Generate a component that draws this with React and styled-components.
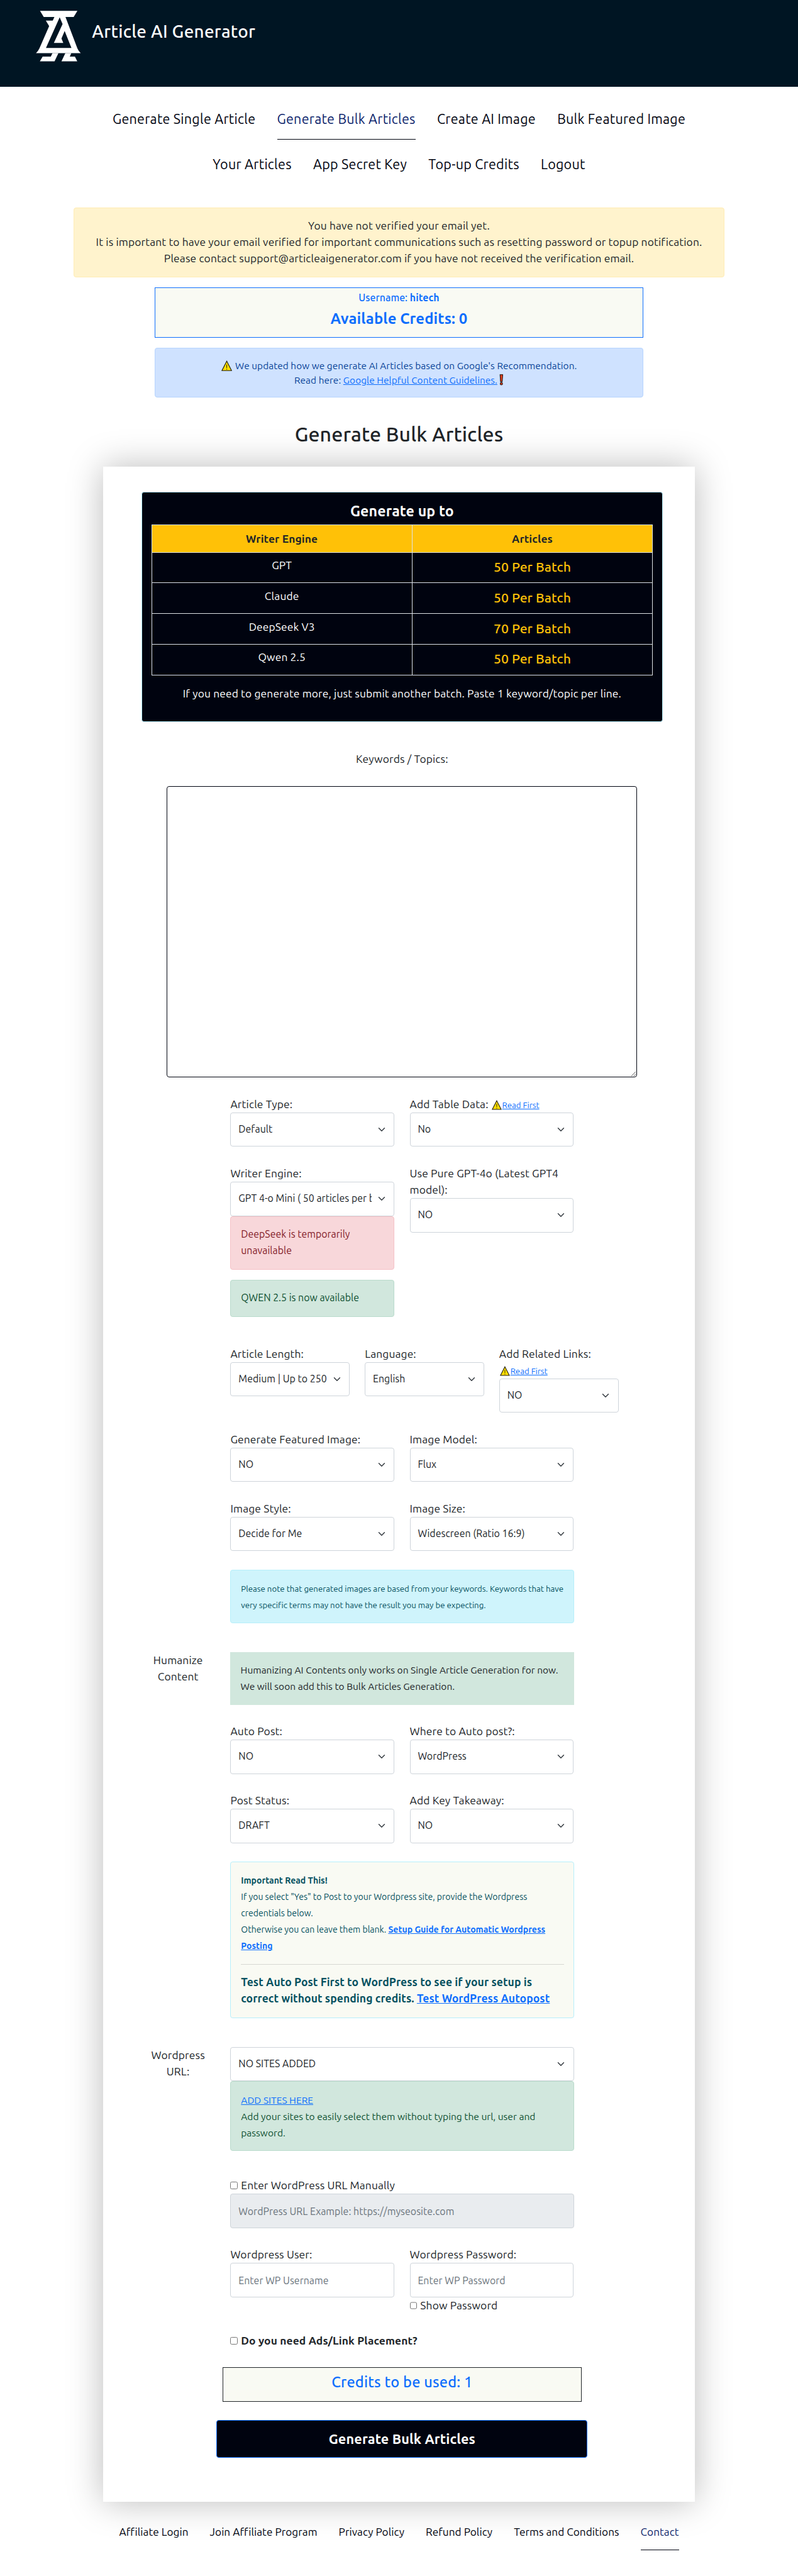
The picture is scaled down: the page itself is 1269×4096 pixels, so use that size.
import React from 'react';
import styled, { createGlobalStyle, css } from 'styled-components';

const rem = (px) => `${px / 16}rem`;

const ink = '#212529';
const night = '#00030f';
const blue = '#0d6efd';
const amber = '#ffc107';
const cream = '#f9faf3';

const Global = createGlobalStyle`
  *, *::before, *::after { box-sizing: border-box; }
  html { font-size: 10.574px; }
  body {
    margin: 0;
    background: #fff;
    color: ${ink};
    font-family: Ubuntu, "Noto Sans", "Open Sans", sans-serif;
    font-size: ${rem(26.3)};
    line-height: ${rem(39.4)};
    letter-spacing: 0.008em;
  }
`;

const Header = styled.header`
  display: flex;
  align-items: flex-start;
  height: ${rem(209)};
  padding: ${rem(25.7)} 0 0 ${rem(86.7)};
  background: #001523;
`;

const LogoMark = styled.svg`
  width: ${rem(108.7)};
  height: ${rem(122.3)};
  fill: #fff;
`;

const Brand = styled.span`
  margin: ${rem(23.7)} 0 0 ${rem(26)};
  color: #fff;
  font-size: ${rem(42)};
  font-weight: 500;
  line-height: ${rem(50)};
  letter-spacing: 0.011em;
`;

const Nav = styled.nav`
  display: flex;
  flex-direction: column;
  height: ${rem(290)};
  padding-top: ${rem(54.6)};
`;

const NavRow = styled.div`
  display: flex;
  justify-content: center;
  gap: ${rem(51.8)};
  height: ${rem(108.8)};
`;

const NavLink = styled.a`
  height: ${rem(72.8)};
  color: ${({ $active }) => ($active ? '#0b1f6b' : night)};
  font-size: ${rem(32.5)};
  line-height: ${rem(48)};
  letter-spacing: 0.0125em;
  white-space: nowrap;
  border-bottom: 1px solid ${({ $active }) => ($active ? night : 'transparent')};
`;

const Main = styled.main`
  display: flex;
  flex-direction: column;
  align-items: center;
`;

const VerifyNotice = styled.div`
  width: ${rem(1565)};
  height: ${rem(168)};
  padding-top: ${rem(23)};
  text-align: center;
  background: #fff3cd;
  border: 1px solid #ffecb5;
  border-radius: ${rem(6)};
  line-height: ${rem(39.46)};
`;

const AccountBox = styled.section`
  width: ${rem(1175)};
  height: ${rem(122)};
  margin-top: ${rem(24)};
  padding-top: ${rem(6.5)};
  text-align: center;
  color: ${blue};
  background: ${cream};
  border: 1px solid ${blue};
`;

const Username = styled.div`
  font-size: ${rem(24)};
  font-weight: 500;
  line-height: ${rem(36)};
  letter-spacing: 0.004em;
`;

const Balance = styled.div`
  margin-top: ${rem(4.6)};
  font-size: ${rem(36)};
  font-weight: 700;
  line-height: ${rem(54)};
`;

const UpdateNotice = styled.div`
  width: ${rem(1175)};
  height: ${rem(120)};
  margin-top: ${rem(23.5)};
  padding-top: ${rem(24)};
  text-align: center;
  color: #084298;
  background: #cfe2ff;
  border: 1px solid #b6d4fe;
  border-radius: ${rem(6)};
  font-size: ${rem(23.2)};
  line-height: ${rem(34.8)};
  letter-spacing: 0.005em;
`;

const Link = styled.a`
  color: ${blue};
  text-decoration: underline;
  font-weight: ${({ $bold }) => ($bold ? 700 : 'inherit')};
`;

const HintLink = styled(Link)`
  font-size: ${rem(20)};
  line-height: 0;
  letter-spacing: 0;
`;

const WarnIcon = styled.svg`
  width: ${({ $size }) => rem($size)};
  height: ${({ $size }) => rem($size)};
  margin: 0 ${({ $gap }) => rem($gap)} 0 ${({ $lead = 0 }) => rem($lead)};
  vertical-align: ${rem(-5)};
`;

const BangIcon = styled.svg`
  width: ${rem(10)};
  height: ${rem(27)};
  vertical-align: ${rem(-5)};
`;

const Title = styled.h1`
  margin: ${rem(58.9)} 0 ${rem(49.4)};
  font-size: ${rem(48.5)};
  font-weight: 500;
  line-height: ${rem(58)};
  letter-spacing: 0.004em;
`;

const Card = styled.section`
  width: ${rem(1423)};
  height: ${rem(4897)};
  padding: ${rem(61)} 0 0 ${rem(91.4)};
  background: #fff;
  box-shadow: 0 0 ${rem(80)} rgba(0, 0, 0, 0.27);
`;

const Inner = styled.form`
  display: flex;
  flex-direction: column;
  align-items: center;
  width: ${rem(1255)};
`;

const LimitPanel = styled.div`
  width: 100%;
  height: ${rem(553)};
  padding: ${rem(23.5)} ${rem(22.5)} 0;
  color: #fff;
  text-align: center;
  background: ${night};
  border: 1px solid #b6effb;
  border-radius: ${rem(6)};
`;

const PanelTitle = styled.h2`
  margin: 0 0 ${rem(12)};
  font-size: ${rem(35)};
  font-weight: 700;
  line-height: ${rem(42)};
`;

const LimitTable = styled.table`
  width: 100%;
  border-collapse: collapse;
  table-layout: fixed;
`;

const HeadCell = styled.th`
  width: ${({ $w }) => $w};
  height: ${rem(65.3)};
  padding: ${rem(12.3)} 0 0;
  vertical-align: top;
  color: ${ink};
  background: ${amber};
  border: 1px solid #dee2e6;
  font-weight: 700;
`;

const Cell = styled.td`
  height: ${rem(73.9)};
  padding: ${rem(11)} 0 0;
  vertical-align: top;
  border: 1px solid #dee2e6;
  ${({ $accent }) =>
    $accent &&
    css`
      color: ${amber};
      font-size: ${rem(32)};
      font-weight: 500;
      line-height: ${rem(48)};
      letter-spacing: 0.004em;
    `}
`;

const PanelNote = styled.p`
  margin: ${rem(24)} 0 0;
`;

const TopicsLabel = styled.label`
  margin: ${rem(70.5)} 0 ${rem(45)};
`;

const TopicsInput = styled.textarea`
  display: block;
  width: ${rem(1132)};
  height: ${rem(700.5)};
  margin: 0;
  background: #fff;
  border: 1px solid ${night};
  border-radius: ${rem(6)};
  resize: both;
  outline: none;
`;

const FormRow = styled.div`
  display: grid;
  grid-template-columns: ${rem(177)} ${rem(1040)};
  column-gap: ${rem(37.5)};
  width: 100%;
  margin-top: ${({ $gap = 44.3 }) => rem($gap)};
`;

const RowLabel = styled.div`
  text-align: center;
`;

const Fields = styled.div`
  grid-column: 2;
  display: grid;
  grid-template-columns: ${({ $cols }) =>
    $cols === 3 ? `repeat(3, ${rem(287.3)})` : $cols === 2 ? `repeat(2, ${rem(394.9)})` : rem(826.3)};
  column-gap: ${({ $cols }) => ($cols === 3 ? rem(36.1) : rem(36.5))};
  align-items: start;
`;

const Field = styled.div`
  display: flex;
  flex-direction: column;
  min-width: 0;
`;

const control = css`
  width: 100%;
  height: ${rem(82.8)};
  margin: 0;
  font-family: inherit;
  font-size: ${rem(24)};
  letter-spacing: 0.003em;
  line-height: ${rem(36)};
  border: 1px solid #ced4da;
  border-radius: ${rem(6)};
  outline: none;
`;

const SelectWrap = styled.div`
  display: grid;
  align-items: center;
`;

const NativeSelect = styled.select`
  ${control}
  grid-area: 1 / 1;
  appearance: none;
  padding: 0 ${rem(53.5)} 0 ${rem(18)};
  color: ${ink};
  background: #fff;
`;

const Chevron = styled.svg`
  grid-area: 1 / 1;
  justify-self: end;
  width: ${rem(18)};
  height: ${rem(18)};
  margin-right: ${rem(22)};
  pointer-events: none;
`;

const TextInput = styled.input`
  ${control}
  padding: 0 ${rem(18)};
  color: ${ink};
  background: ${({ disabled }) => (disabled ? '#e9ecef' : '#fff')};
  &::placeholder { color: #6c757d; opacity: 1; }
`;

const CheckLabel = styled.label`
  display: flex;
  align-items: center;
  gap: ${rem(7.5)};
  font-weight: ${({ $bold }) => ($bold ? 700 : 400)};
`;

const Checkbox = styled.input`
  width: ${rem(18)};
  height: ${rem(18)};
  margin: 0;
`;

const tones = {
  danger: ['#842029', '#f8d7da', '#f5c2c7'],
  success: ['#0f5132', '#d1e7dd', '#badbcc'],
  info: ['#055160', '#cff4fc', '#b6effb'],
  light: ['#055160', cream, '#b6effb'],
};

const Alert = styled.div`
  height: ${({ $h }) => rem($h)};
  margin-top: ${({ $mt = 0 }) => rem($mt)};
  padding: ${({ $pt = 23.5 }) => rem($pt)} ${rem(22)} 0 ${rem(24)};
  color: ${({ $tone }) => tones[$tone][0]};
  background: ${({ $tone }) => tones[$tone][1]};
  border: 1px solid ${({ $tone }) => tones[$tone][2]};
  border-radius: ${rem(6)};
  font-size: ${({ $size = 24 }) => rem($size)};
  line-height: ${rem(39.2)};
  letter-spacing: 0.001em;
`;

const HumanizeNote = styled.div`
  height: ${rem(126.5)};
  padding: ${rem(24.6)} 0 0 ${rem(24.5)};
  background: #d1e7dd;
  font-size: ${rem(23.4)};
  line-height: ${rem(38.8)};
  letter-spacing: 0.002em;
`;

const Rule = styled.hr`
  height: ${rem(2)};
  margin: ${rem(23)} 0;
  background: currentColor;
  border: 0;
  opacity: 0.28;
`;

const TestNote = styled.p`
  margin: 0;
  font-size: ${rem(26.5)};
  font-weight: 700;
  line-height: ${rem(39.1)};
  letter-spacing: 0.005em;
`;

const CreditBox = styled.div`
  width: ${rem(863.5)};
  height: ${rem(82)};
  margin-top: ${rem(45)};
  padding-top: ${rem(6.5)};
  text-align: center;
  color: ${blue};
  background: ${cream};
  border: 1px solid ${ink};
  font-size: ${rem(35.5)};
  font-weight: 500;
  line-height: ${rem(53)};
  letter-spacing: 0.01em;
`;

const SubmitButton = styled.button`
  width: ${rem(892.7)};
  height: ${rem(90)};
  margin-top: ${rem(45)};
  padding: 0;
  color: #fff;
  background: ${night};
  border: 1px solid ${blue};
  border-radius: ${rem(6)};
  font-family: inherit;
  font-size: ${rem(32.8)};
  font-weight: 700;
  letter-spacing: 0.007em;
`;

const Footer = styled.footer`
  display: flex;
  justify-content: center;
  gap: ${rem(51.4)};
  height: ${rem(179)};
  padding-top: ${rem(52.5)};
`;

const FooterLink = styled.a`
  height: ${rem(64)};
  color: ${({ $active }) => ($active ? '#0b1f6b' : night)};
  font-size: ${rem(26)};
  letter-spacing: 0.003em;
  border-bottom: 1px solid ${({ $active }) => ($active ? night : 'transparent')};
`;

const Logo = () => (
  <LogoMark viewBox="80 77 326 367" aria-hidden="true">
    <path
      fillRule="evenodd"
      d="M110 78H380L353 122H294L380 350Q387 368 404 383H81Q96 370 106 348L176 188L152 148H202L214 122H137ZM252 125L153 346H337L288 224L265 278L278 310H210L273 174Z"
    />
    <path d="M200 383H243L215 443H109L129 408H188ZM293 383H336L325 408H362L379 443H265Z" />
  </LogoMark>
);

const Warning = ({ size = 26, gap = 0, lead = 0 }) => (
  <WarnIcon viewBox="0 0 26 26" $size={size} $gap={gap} $lead={lead} aria-hidden="true">
    <path d="M13 2L24.6 24.6H1.4Z" fill="#ffde00" stroke="#1c1a10" strokeWidth="1.7" />
    <path d="M13 10V18.3M13 20.2V22.2" stroke="#1c1a10" strokeWidth="1.5" />
  </WarnIcon>
);

const Bang = () => (
  <BangIcon viewBox="0 0 10 27" aria-hidden="true">
    <path d="M1.8 1H8.2L7 18H3Z" fill="#e8401c" stroke="#1c1210" strokeWidth="1.6" />
    <circle cx="5" cy="23" r="2.8" fill="#e8401c" stroke="#1c1210" strokeWidth="1.6" />
  </BangIcon>
);

const Select = ({ value }) => (
  <SelectWrap>
    <NativeSelect defaultValue={value}>
      <option value={value}>{value}</option>
    </NativeSelect>
    <Chevron viewBox="0 0 16 16" fill="none" stroke="#343a40" strokeWidth="2" strokeLinecap="round" strokeLinejoin="round">
      <path d="M2 5l6 6 6-6" />
    </Chevron>
  </SelectWrap>
);

const SelectField = ({ label, value, children }) => (
  <Field>
    <label>{label}</label>
    <Select value={value} />
    {children}
  </Field>
);

const ReadFirst = () => (
  <HintLink>
    <Warning size={24} lead={2} gap={1} />
    Read First
  </HintLink>
);

const limits = [
  ['GPT', '50 Per Batch'],
  ['Claude', '50 Per Batch'],
  ['DeepSeek V3', '70 Per Batch'],
  ['Qwen 2.5', '50 Per Batch'],
];

const footerLinks = [
  'Affiliate Login',
  'Join Affiliate Program',
  'Privacy Policy',
  'Refund Policy',
  'Terms and Conditions',
  'Contact',
];

export default function App() {
  return (
    <>
      <Global />
      <Header>
        <Logo />
        <Brand>Article AI Generator</Brand>
      </Header>
      <Nav>
        <NavRow>
          <NavLink>Generate Single Article</NavLink>
          <NavLink $active>Generate Bulk Articles</NavLink>
          <NavLink>Create AI Image</NavLink>
          <NavLink>Bulk Featured Image</NavLink>
        </NavRow>
        <NavRow>
          <NavLink>Your Articles</NavLink>
          <NavLink>App Secret Key</NavLink>
          <NavLink>Top-up Credits</NavLink>
          <NavLink>Logout</NavLink>
        </NavRow>
      </Nav>
      <Main>
        <VerifyNotice>
          You have not verified your email yet.
          <br />
          It is important to have your email verified for important communications such as resetting password or topup
          notification.
          <br />
          Please contact support@articleaigenerator.com if you have not received the verification email.
        </VerifyNotice>
        <AccountBox>
          <Username>
            Username: <b>hitech</b>
          </Username>
          <Balance>Available Credits: 0</Balance>
        </AccountBox>
        <UpdateNotice>
          <Warning gap={8} />
          We updated how we generate AI Articles based on Google's Recommendation.
          <br />
          Read here: <Link>Google Helpful Content Guidelines.</Link> <Bang />
        </UpdateNotice>
        <Title>Generate Bulk Articles</Title>
        <Card>
          <Inner>
            <LimitPanel>
              <PanelTitle>Generate up to</PanelTitle>
              <LimitTable>
                <thead>
                  <tr>
                    <HeadCell $w="52%">Writer Engine</HeadCell>
                    <HeadCell $w="48%">Articles</HeadCell>
                  </tr>
                </thead>
                <tbody>
                  {limits.map(([engine, count]) => (
                    <tr key={engine}>
                      <Cell>{engine}</Cell>
                      <Cell $accent>{count}</Cell>
                    </tr>
                  ))}
                </tbody>
              </LimitTable>
              <PanelNote>
                If you need to generate more, just submit another batch. Paste 1 keyword/topic per line.
              </PanelNote>
            </LimitPanel>

            <TopicsLabel>Keywords / Topics:</TopicsLabel>
            <TopicsInput />

            <FormRow $gap={45}>
              <Fields $cols={2}>
                <SelectField label="Article Type:" value="Default" />
                <SelectField label={<>Add Table Data: <ReadFirst /></>} value="No" />
              </Fields>
            </FormRow>
            <FormRow>
              <Fields $cols={2}>
                <SelectField label="Writer Engine:" value="GPT 4-o Mini ( 50 articles per batch )">
                  <Alert $tone="danger" $h={129}>
                    DeepSeek is temporarily unavailable
                  </Alert>
                  <Alert $tone="success" $h={90} $mt={24}>
                    QWEN 2.5 is now available
                  </Alert>
                </SelectField>
                <SelectField label="Use Pure GPT-4o (Latest GPT4 model):" value="NO" />
              </Fields>
            </FormRow>
            <FormRow $gap={69}>
              <Fields $cols={3}>
                <SelectField label="Article Length:" value="Medium | Up to 2500 words" />
                <SelectField label="Language:" value="English" />
                <SelectField
                  label={<>Add Related Links:<br /><ReadFirst /></>}
                  value="NO"
                />
              </Fields>
            </FormRow>
            <FormRow>
              <Fields $cols={2}>
                <SelectField label="Generate Featured Image:" value="NO" />
                <SelectField label="Image Model:" value="Flux" />
              </Fields>
            </FormRow>
            <FormRow>
              <Fields $cols={2}>
                <SelectField label="Image Style:" value="Decide for Me" />
                <SelectField label="Image Size:" value="Widescreen (Ratio 16:9)" />
              </Fields>
            </FormRow>
            <FormRow $gap={45}>
              <Fields $cols={1}>
                <Alert $tone="info" $h={129} $size={20} $pt={25}>
                  Please note that generated images are based from your keywords. Keywords that have
                  <br />
                  very specific terms may not have the result you may be expecting.
                </Alert>
              </Fields>
            </FormRow>
            <FormRow $gap={69}>
              <RowLabel>Humanize Content</RowLabel>
              <Fields $cols={1}>
                <HumanizeNote>
                  Humanizing AI Contents only works on Single Article Generation for now.
                  <br />
                  We will soon add this to Bulk Articles Generation.
                </HumanizeNote>
              </Fields>
            </FormRow>
            <FormRow>
              <Fields $cols={2}>
                <SelectField label="Auto Post:" value="NO" />
                <SelectField label="Where to Auto post?:" value="WordPress" />
              </Fields>
            </FormRow>
            <FormRow>
              <Fields $cols={2}>
                <SelectField label="Post Status:" value="DRAFT" />
                <SelectField label="Add Key Takeaway:" value="NO" />
              </Fields>
            </FormRow>
            <FormRow $gap={45}>
              <Fields $cols={1}>
                <Alert $tone="light" $h={376} $size={21.2} $pt={25.5}>
                  <b>Important Read This!</b>
                  <br />
                  If you select "Yes" to Post to your Wordpress site, provide the Wordpress
                  <br />
                  credentials below.
                  <br />
                  Otherwise you can leave them blank.{' '}
                  <Link $bold>
                    Setup Guide for Automatic Wordpress
                    <br />
                    Posting
                  </Link>
                  <Rule />
                  <TestNote>
                    Test Auto Post First to WordPress to see if your setup is
                    <br />
                    correct without spending credits. <Link>Test WordPress Autopost</Link>
                  </TestNote>
                </Alert>
              </Fields>
            </FormRow>
            <FormRow $gap={69}>
              <RowLabel>Wordpress URL:</RowLabel>
              <Fields $cols={1}>
                <Field>
                  <Select value="NO SITES ADDED" />
                  <Alert $tone="success" $h={168} $size={23.5} $pt={25}>
                    <Link>ADD SITES HERE</Link>
                    <br />
                    Add your sites to easily select them without typing the url, user and
                    <br />
                    password.
                  </Alert>
                </Field>
              </Fields>
            </FormRow>
            <FormRow $gap={63.4}>
              <Fields $cols={1}>
                <Field>
                  <CheckLabel>
                    <Checkbox type="checkbox" />
                    Enter WordPress URL Manually
                  </CheckLabel>
                  <TextInput disabled placeholder="WordPress URL Example: https://myseosite.com" />
                </Field>
              </Fields>
            </FormRow>
            <FormRow>
              <Fields $cols={2}>
                <Field>
                  <label>Wordpress User:</label>
                  <TextInput placeholder="Enter WP Username" />
                </Field>
                <Field>
                  <label>Wordpress Password:</label>
                  <TextInput type="password" placeholder="Enter WP Password" />
                  <CheckLabel>
                    <Checkbox type="checkbox" />
                    Show Password
                  </CheckLabel>
                </Field>
              </Fields>
            </FormRow>
            <FormRow $gap={45}>
              <Fields $cols={1}>
                <CheckLabel $bold>
                  <Checkbox type="checkbox" />
                  Do you need Ads/Link Placement?
                </CheckLabel>
              </Fields>
            </FormRow>

            <CreditBox>Credits to be used: 1</CreditBox>
            <SubmitButton type="button">Generate Bulk Articles</SubmitButton>
          </Inner>
        </Card>
      </Main>
      <Footer>
        {footerLinks.map((name) => (
          <FooterLink key={name} $active={name === 'Contact'}>
            {name}
          </FooterLink>
        ))}
      </Footer>
    </>
  );
}
